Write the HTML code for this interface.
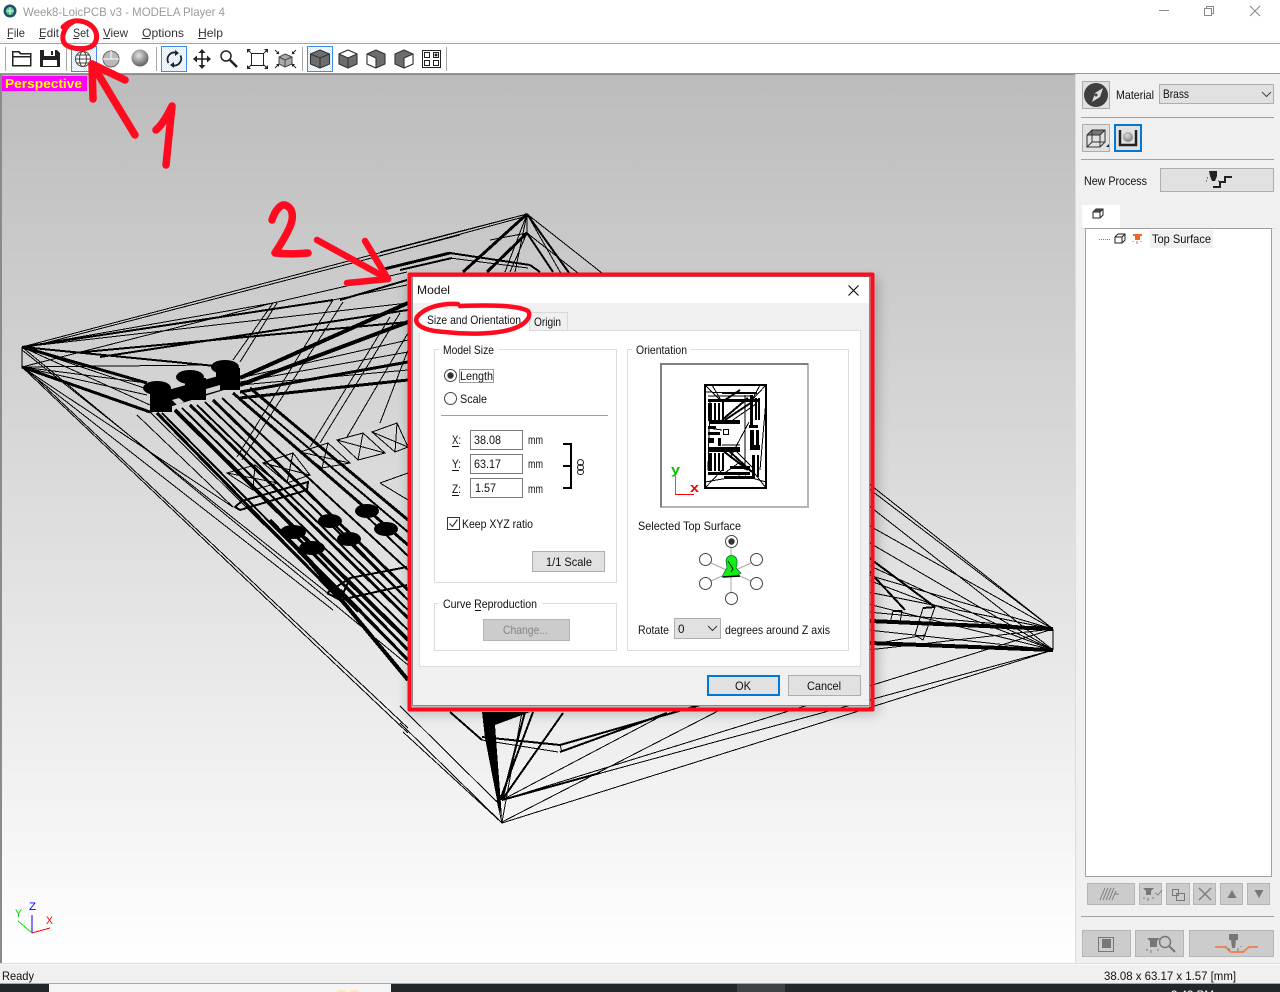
<!DOCTYPE html>
<html><head><meta charset="utf-8"><title>MODELA Player 4</title>
<style>
html,body{margin:0;padding:0;background:#f0f0f0;width:1280px;height:992px;overflow:hidden}
svg{position:absolute;left:0;top:0;display:block}
text{font-family:"Liberation Sans",sans-serif;font-size:12px;fill:#111;white-space:pre}
.m text{fill:#333}
.w line,.w path,.w polyline{fill:none;stroke:#000;stroke-width:1;shape-rendering:crispEdges}
.w .t2{stroke-width:2}.w .t3{stroke-width:3}.w .t4{stroke-width:4}
.c{shape-rendering:crispEdges}
.b{fill:#e1e1e1;stroke:#adadad;shape-rendering:crispEdges}
.g{fill:#fff;stroke:#dcdcdc;shape-rendering:crispEdges}
.i{fill:#fff;stroke:#7a7a7a;shape-rendering:crispEdges}
.r{fill:#fff;stroke:#444}
.red{fill:none;stroke:#ff0a1e;stroke-width:7.5;stroke-linecap:round;stroke-linejoin:round}
.dis{fill:#ccc;stroke:#b5b5b5;shape-rendering:crispEdges}
.ic{fill:none;stroke:#222;stroke-width:1.5}
.gi{fill:none;stroke:#808080;stroke-width:1.5}
</style></head><body>
<svg width="1280" height="992" viewBox="0 0 1280 992" xmlns="http://www.w3.org/2000/svg">
<defs>
<linearGradient id="bg" x1="0" y1="0" x2="0" y2="1"><stop offset="0" stop-color="#bcbcbc"/><stop offset="1" stop-color="#ffffff"/></linearGradient>
<radialGradient id="sph" cx=".42" cy=".35" r=".7"><stop offset="0" stop-color="#e4e4e4"/><stop offset=".6" stop-color="#8e8e8e"/><stop offset="1" stop-color="#555"/></radialGradient>
<radialGradient id="sph2" cx=".42" cy=".35" r=".7"><stop offset="0" stop-color="#dcdcdc"/><stop offset="1" stop-color="#777"/></radialGradient>
<filter id="sh" x="-10%" y="-10%" width="120%" height="120%"><feGaussianBlur stdDeviation="6"/></filter>
<pattern id="dit" width="2" height="2" patternUnits="userSpaceOnUse"><rect width="2" height="2" fill="#fff"/><rect width="1" height="1" fill="#dfe9f3"/><rect x="1" y="1" width="1" height="1" fill="#dfe9f3"/></pattern>
</defs>

<!-- window chrome -->
<rect width="1280" height="992" fill="#f0f0f0"/>
<rect width="1280" height="43" fill="#fff"/>
<rect y="41" width="1280" height="1" fill="#f0f0f0"/>
<rect y="43" width="1280" height="1" fill="#a0a0a0"/>
<rect y="44" width="1280" height="29" fill="#fff"/>
<rect y="73" width="1280" height="1" fill="#9a9a9a"/>

<!-- app icon -->
<circle cx="10" cy="11" r="6.5" fill="#1d4f6e"/><circle cx="10" cy="11" r="4" fill="#5fc27a"/><path d="M10 7.5v7M6.5 11h7" stroke="#dff" stroke-width="1"/>
<text x="23" y="16" textLength="202" lengthAdjust="spacingAndGlyphs" style="fill:#9b9b9b">Week8-LoicPCB v3 - MODELA Player 4</text>
<!-- window controls -->
<path class="c" d="M1159 10.500h10" stroke="#888" fill="none"/>
<path class="c" d="M1204.500 8.500h7v7h-7zM1206.500 8.500v-2h7v7h-2" stroke="#888" fill="none"/>
<path d="M1250 6l10 10M1260 6l-10 10" stroke="#888" fill="none"/>

<!-- menu -->
<g class="m">
<text x="7" y="37" textLength="18" lengthAdjust="spacingAndGlyphs">File</text><rect x="7" y="38" width="6" height="1" fill="#333"/>
<text x="39" y="37" textLength="20" lengthAdjust="spacingAndGlyphs">Edit</text><rect x="39" y="38" width="6" height="1" fill="#333"/>
<text x="73" y="37" textLength="16" lengthAdjust="spacingAndGlyphs">Set</text><rect x="73" y="38" width="6" height="1" fill="#333"/>
<text x="103" y="37" textLength="25" lengthAdjust="spacingAndGlyphs">View</text><rect x="103" y="38" width="7" height="1" fill="#333"/>
<text x="142" y="37" textLength="42" lengthAdjust="spacingAndGlyphs">Options</text><rect x="142" y="38" width="8" height="1" fill="#333"/>
<text x="198" y="37" textLength="25" lengthAdjust="spacingAndGlyphs">Help</text><rect x="198" y="38" width="8" height="1" fill="#333"/>
</g>

<!-- toolbar -->
<g class="c" fill="#a8a8a8">
<rect x="5" y="47" width="1" height="24"/><rect x="66" y="47" width="1" height="24"/><rect x="156" y="47" width="1" height="24"/><rect x="302" y="47" width="1" height="24"/><rect x="446" y="47" width="1" height="24"/>
</g>
<path d="M12.500 65.500v-14h6l2 2h10v12z M12.500 56.500h18" fill="#fff" stroke="#222" stroke-width="1.500" class="c"/>
<path d="M40 50h17l3 3v14H40z" fill="#222"/><rect x="44" y="50" width="11" height="6" fill="#fff"/><rect x="51" y="51" width="2" height="4" fill="#222"/><rect x="43" y="60" width="14" height="6" fill="#fff"/>
<!-- globe selected -->
<rect x="71.500" y="46.500" width="25" height="25" fill="url(#dit)" stroke="#3c8fe4" class="c"/>
<circle cx="83" cy="59" r="7.500" fill="#fff" stroke="#444"/><ellipse cx="83" cy="59" rx="3.500" ry="7.500" fill="none" stroke="#444"/><path d="M75.500 59h15M76.500 55h13M76.500 63h13" stroke="#444" fill="none"/>
<circle cx="111" cy="59" r="8" fill="#b9b9b9" stroke="#666"/><path d="M103 59h16M111 51v8" stroke="#fff" fill="none"/>
<circle cx="140" cy="58" r="8.500" fill="url(#sph)"/>
<!-- rotate -->
<rect x="161.500" y="46.500" width="25" height="25" fill="url(#dit)" stroke="#3c8fe4" class="c"/>
<path d="M168.500 63a7 7 0 0 1 7-10.500M180.500 55.500a7 7 0 0 1-7 10" fill="none" stroke="#222" stroke-width="1.800"/>
<path d="M175 50l4 3-4 3zM174 68l-4-3 4-3z" fill="#222"/>
<!-- move -->
<path d="M202 51v16M194 59h16" stroke="#222" stroke-width="1.600" fill="none"/>
<path d="M202 49l3.500 4h-7zM202 69l3.500-4h-7zM193 59l4-3.500v7zM211 59l-4-3.500v7z" fill="#222"/>
<!-- zoom -->
<circle cx="226" cy="56" r="5" fill="#fff" stroke="#222" stroke-width="1.500"/><path d="M230 60l7 7" stroke="#222" stroke-width="2.500"/>
<!-- fit -->
<rect class="c" x="251.500" y="53.500" width="12" height="12" fill="none" stroke="#222"/>
<path d="M248 50l3 3M267 50l-3 3M248 68l3-3M267 68l-3-3" stroke="#222" fill="none"/>
<path d="M247 49h4l-4 4zM268 49h-4l4 4zM247 69h4l-4-4zM268 69h-4l4-4z" fill="#222"/>
<!-- fit2 -->
<path d="M285 54l7 3v7l-7 3-6-3v-7z" fill="#aaa" stroke="#444"/><path d="M279 57l6 3 7-3M285 60v7" fill="none" stroke="#444"/>
<path d="M275 50l4 4M296 50l-4 4M275 68l4-4M296 68l-4-4" stroke="#222" fill="none"/>
<path d="M279 54v-3l-3 3zM292 54v-3l3 3zM279 64v3l-3-3zM292 64v3l3-3z" fill="#222"/>
<!-- view cubes -->
<rect x="307.500" y="46.500" width="25" height="25" fill="url(#dit)" stroke="#3c8fe4" class="c"/>
<g stroke="#333" stroke-width="1.100" stroke-linejoin="round">
<path d="M320 50l9.500 4v10l-9.500 4-9.500-4V54z" fill="#6d6d6d"/><path d="M310.500 54l9.500 4 9.500-4M320 58v10" fill="none"/>
<path d="M348 50l9 4v10l-9 4-9-4V54z" fill="#6d6d6d"/><path d="M348 50l9 4-9 4-9-4z" fill="#fff"/><path d="M348 58v10" fill="none"/>
<path d="M376 50l9 4v10l-9 4-9-4V54z" fill="#6d6d6d"/><path d="M367 54l9 4v10l-9-4z" fill="#fff"/>
<path d="M404 50l9 4v10l-9 4-9-4V54z" fill="#6d6d6d"/><path d="M413 54l-9 4v10l9-4z" fill="#fff"/>
</g>
<!-- quad -->
<g class="c" fill="none" stroke="#222"><rect x="422.500" y="50.500" width="18" height="17"/><rect x="424.500" y="52.500" width="5" height="5"/><rect x="433.500" y="52.500" width="5" height="5"/><rect x="424.500" y="60.500" width="5" height="5"/><rect x="433.500" y="60.500" width="5" height="5"/></g>
<circle cx="436" cy="55" r="1.500" fill="#222"/>

<!-- viewport -->
<rect x="0" y="74" width="1076" height="890" fill="url(#bg)" class="c"/>
<rect x="0" y="74" width="2" height="890" fill="#8a8a8a" class="c"/>
<rect x="2" y="74" width="1074" height="1" fill="#8a8a8a" class="c"/>
<rect x="1075" y="74" width="1" height="890" fill="#dcdcdc" class="c"/>
<rect x="2" y="76" width="85" height="15" fill="#ff00ff" class="c"/>
<text x="5" y="88" textLength="77" lengthAdjust="spacingAndGlyphs" style="fill:#ffff00;font-weight:bold;font-size:13px">Perspective</text>

<!-- wireframe -->
<g class="w">
<!-- outer: left corner -->
<line x1="22" y1="347" x2="22" y2="367"/>
<line x1="22" y1="347" x2="527" y2="214"/>
<line x1="22" y1="349" x2="460" y2="235"/>
<line x1="22" y1="367" x2="273" y2="303"/>
<line x1="22" y1="347" x2="273" y2="303"/>
<line x1="22" y1="347" x2="333" y2="300" class="t2"/>
<line x1="22" y1="347" x2="408" y2="303"/>
<line x1="22" y1="367" x2="210" y2="365"/>
<line x1="22" y1="347" x2="215" y2="366" class="t2"/>
<line x1="22" y1="347" x2="147" y2="383" class="t3"/>
<line x1="22" y1="347" x2="150" y2="390"/>
<line x1="22" y1="367" x2="150" y2="412" class="t3"/>
<line x1="22" y1="367" x2="147" y2="383"/>
<line x1="22" y1="367" x2="147" y2="395"/>
<line x1="22" y1="347" x2="150" y2="405"/>
<line x1="22" y1="347" x2="408" y2="665"/>
<line x1="22" y1="367" x2="408" y2="733"/>
<line x1="24" y1="367" x2="408" y2="728"/>
<line x1="22" y1="367" x2="333" y2="610"/>
<line x1="22" y1="367" x2="233" y2="507"/>
<line x1="22" y1="350" x2="330" y2="595"/>
<line x1="400" y1="723" x2="502" y2="823"/>
<line x1="403" y1="732" x2="502" y2="823"/>
<line x1="400" y1="706" x2="497" y2="802"/>
<line x1="340" y1="300" x2="407" y2="280" class="t2"/>
<line x1="273" y1="303" x2="407" y2="272"/>
<line x1="333" y1="300" x2="407" y2="285"/>
<line x1="73" y1="353" x2="408" y2="322" class="t2"/>
<line x1="100" y1="357" x2="408" y2="310" class="t2"/>
<!-- from cluster to right -->
<line x1="240" y1="378" x2="408" y2="303" class="t4"/>
<line x1="240" y1="385" x2="408" y2="322" class="t4"/>
<line x1="240" y1="392" x2="408" y2="362" class="t3"/>
<line x1="240" y1="398" x2="408" y2="380" class="t3"/>
<line x1="240" y1="378" x2="408" y2="340"/>
<line x1="240" y1="382" x2="408" y2="352"/>
<line x1="240" y1="385" x2="408" y2="370"/>
<!-- rising doubles -->
<line x1="233" y1="360" x2="273" y2="303"/><line x1="240" y1="362" x2="277" y2="303"/>
<line x1="333" y1="300" x2="237" y2="457"/><line x1="343" y1="302" x2="242" y2="460"/>
<line x1="390" y1="317" x2="310" y2="447"/><line x1="400" y1="313" x2="320" y2="443"/>
<line x1="408" y1="333" x2="347" y2="437"/><line x1="408" y1="350" x2="380" y2="423"/>
<!-- pads -->
<path d="M337 440l21 20 27-7-22-20zM337 440l48 13M358 460l5-27"/>
<path d="M372 432l23 20 13-5-11-24zM372 432l36 15M395 452l2-29"/>
<path d="M300 452l22 16 28-5-22-20zM300 452l50 11M322 468l6-25"/>
<path d="M263 463l24 20 23-8-17-22zM263 463l47 12M287 483l6-30"/>
<path d="M227 473l26 17 25-7-23-18zM227 473l51 10M253 490l2-25"/>
<path d="M235 507l5 3 67-20 1-8-66 19z" class="t2"/>
<path d="M380 483l28-10M380 483l28 17"/>
<path d="M327 593l23-15 57-11M327 593l13 7 67-15M350 578l-10 22" class="t2"/>
<!-- diagonals -->
<line x1="157" y1="413" x2="350" y2="610" class="t3"/>
<line x1="162" y1="413" x2="358" y2="612" class="t2"/>
<line x1="137" y1="415" x2="233" y2="507"/>
<line x1="150" y1="412" x2="340" y2="600"/>
<line x1="175" y1="410" x2="408" y2="640" class="t4"/>
<line x1="182" y1="408" x2="408" y2="630" class="t2"/>
<line x1="190" y1="405" x2="408" y2="618" class="t3"/>
<line x1="197" y1="405" x2="408" y2="610" class="t2"/>
<line x1="205" y1="402" x2="408" y2="600" class="t2"/>
<line x1="213" y1="400" x2="408" y2="590" class="t3"/>
<line x1="222" y1="398" x2="408" y2="570" class="t2"/>
<line x1="233" y1="393" x2="408" y2="545" class="t3"/>
<line x1="241" y1="391" x2="408" y2="532" class="t2"/>
<line x1="250" y1="388" x2="408" y2="520" class="t3"/>
<line x1="270" y1="520" x2="408" y2="660" class="t3"/>
<line x1="290" y1="530" x2="408" y2="650" class="t3"/>
<line x1="330" y1="520" x2="408" y2="600" class="t2"/>
<line x1="360" y1="510" x2="408" y2="556" class="t2"/>
<line x1="300" y1="550" x2="408" y2="680" class="t4"/>
<line x1="340" y1="590" x2="408" y2="660" class="t3"/>
<!-- top apex -->
<line x1="527" y1="214" x2="527" y2="233"/>
<line x1="527" y1="214" x2="380" y2="252"/>
<line x1="527" y1="216" x2="380" y2="256"/>
<line x1="527" y1="233" x2="490" y2="240"/>
<line x1="527" y1="214" x2="463" y2="272" class="t3"/>
<line x1="527" y1="233" x2="487" y2="272" class="t3"/>
<line x1="527" y1="214" x2="505" y2="272"/>
<line x1="527" y1="214" x2="515" y2="272"/>
<line x1="527" y1="233" x2="510" y2="272"/>
<line x1="527" y1="214" x2="607" y2="277"/>
<line x1="527" y1="214" x2="572" y2="277" class="t2"/>
<line x1="527" y1="233" x2="553" y2="272" class="t2"/>
<line x1="527" y1="233" x2="583" y2="277"/>
<line x1="527" y1="214" x2="563" y2="277"/>
<line x1="450" y1="253" x2="530" y2="265" class="t2"/>
<line x1="450" y1="258" x2="528" y2="268"/>
<line x1="530" y1="265" x2="540" y2="272" class="t2"/>
<line x1="450" y1="253" x2="380" y2="270" class="t3"/>
<line x1="452" y1="258" x2="400" y2="270" class="t2"/>
<!-- right corner -->
<line x1="1053" y1="629" x2="1053" y2="650"/>
<line x1="868" y1="483" x2="1053" y2="629"/>
<line x1="868" y1="488" x2="1053" y2="629"/>
<line x1="868" y1="505" x2="1053" y2="650"/>
<line x1="868" y1="525" x2="1053" y2="629"/>
<line x1="868" y1="542" x2="1053" y2="650"/>
<line x1="868" y1="565" x2="1053" y2="650"/>
<line x1="868" y1="575" x2="1053" y2="629"/>
<line x1="868" y1="580" x2="1053" y2="650"/>
<line x1="868" y1="592" x2="1053" y2="629"/>
<line x1="868" y1="604" x2="1053" y2="650"/>
<line x1="868" y1="612" x2="1053" y2="629"/>
<line x1="868" y1="630" x2="1053" y2="650"/>
<line x1="870" y1="621" x2="1053" y2="629" class="t4"/>
<line x1="870" y1="643" x2="1053" y2="650" class="t4"/>
<line x1="868" y1="650" x2="1053" y2="629"/>
<line x1="868" y1="557" x2="935" y2="607" class="t2"/>
<line x1="868" y1="570" x2="905" y2="610" class="t2"/>
<path d="M935 607l-12 1-8 27 8 5zM923 608l12-1" />
<line x1="923" y1="608" x2="935" y2="607" class="t2"/>
<path d="M902 611l-9 0-3 12 10-1z"/>
<line x1="893" y1="611" x2="902" y2="611" class="t2"/>
<line x1="868" y1="645" x2="925" y2="635"/>
<line x1="1053" y1="629" x2="502" y2="800"/>
<line x1="1053" y1="650" x2="502" y2="823"/>
<line x1="1053" y1="650" x2="502" y2="800"/>
<!-- bottom apex -->
<polygon points="482,712 530,712 495,725 502,818 497,800 485,738" fill="#000" style="shape-rendering:crispEdges"/>
<line x1="502" y1="823" x2="497" y2="800"/>
<line x1="560" y1="745" x2="700" y2="705" class="t2"/>
<line x1="560" y1="752" x2="667" y2="713" class="t2"/>
<line x1="560" y1="745" x2="562" y2="752"/>
<line x1="482" y1="737" x2="560" y2="745" class="t2"/>
<line x1="482" y1="740" x2="558" y2="752"/>
<line x1="450" y1="712" x2="482" y2="740" class="t2"/>
<line x1="502" y1="822" x2="720" y2="710"/>
<line x1="502" y1="800" x2="667" y2="713"/>
<line x1="500" y1="800" x2="533" y2="712" class="t2"/>
<line x1="502" y1="800" x2="563" y2="713" class="t2"/>
<line x1="502" y1="822" x2="522" y2="712"/>
<line x1="502" y1="800" x2="525" y2="712" class="t2"/>
<line x1="502" y1="800" x2="600" y2="773" class="t2"/>
</g>
<!-- solid pad blobs -->
<g fill="#000">
<ellipse cx="225" cy="367" rx="14" ry="7"/><ellipse cx="190" cy="377" rx="14" ry="7"/><ellipse cx="157" cy="388" rx="14" ry="7"/>
<path d="M150 395l90-25v15l-90 28z"/>
<rect x="216" y="368" width="24" height="22"/><rect x="185" y="378" width="21" height="22"/><rect x="150" y="390" width="22" height="22"/>
<ellipse cx="367" cy="511" rx="12" ry="7"/><ellipse cx="330" cy="521" rx="12" ry="7"/><ellipse cx="386" cy="529" rx="12" ry="7"/><ellipse cx="349" cy="539" rx="12" ry="7"/><ellipse cx="293" cy="532" rx="13" ry="7"/><ellipse cx="312" cy="548" rx="13" ry="7"/>
</g>
<g fill="#d2d2d2"><path d="M172 400l7-2 5 4-7 3zM206 389l14-4v5l-14 4z"/></g>

<!-- axis -->
<path d="M32 933V915" stroke="#0000ff" class="c"/>
<path d="M32 933L18 921" stroke="#00e000" class="c"/>
<path d="M32 933L50 928" stroke="#ff0000" class="c"/>
<text x="29" y="910" textLength="7" lengthAdjust="spacingAndGlyphs" style="fill:#0000ff;font-size:11px">Z</text>
<text x="15" y="917" textLength="7" lengthAdjust="spacingAndGlyphs" style="fill:#00d000;font-size:11px">Y</text>
<text x="46" y="924" textLength="7" lengthAdjust="spacingAndGlyphs" style="fill:#ff0000;font-size:11px">X</text>

<!-- right panel -->
<rect x="1077" y="74" width="203" height="890" fill="#f0f0f0" class="c"/>
<rect x="1082.500" y="81.500" width="27" height="27" class="b"/>
<circle cx="1096" cy="95" r="12" fill="#3f3f3f"/><path d="M1103 88l-8 5-3 9 8-5z" fill="#ddd"/><circle cx="1096" cy="95" r="1.500" fill="#3f3f3f"/>
<text x="1116" y="99" textLength="38" lengthAdjust="spacingAndGlyphs">Material</text>
<rect x="1159.500" y="84.500" width="114" height="19" class="b"/>
<text x="1163" y="98" textLength="26" lengthAdjust="spacingAndGlyphs">Brass</text>
<path d="M1262 92l4.500 4.500 4.500-4.500" fill="none" stroke="#444"/>
<rect x="1081" y="117" width="193" height="1" fill="#a0a0a0" class="c"/>
<rect x="1082.500" y="124.500" width="27" height="27" class="b"/>
<path d="M1092 130h13l-5 5h-13z" fill="#777"/>
<path d="M1087 135l5-5h13v12l-5 5h-13zM1087 135h13v12M1100 135l5-5M1087 147l5-5h13M1092 130v12" fill="none" stroke="#333"/><path d="M1109 147v-3l-3 3z" fill="#222"/>
<rect x="1115" y="125" width="26" height="26" fill="#e1e1e1" stroke="#0078d7" stroke-width="2" class="c"/>
<path d="M1120 130v15h16v-15" fill="none" stroke="#222" stroke-width="2.500"/><circle cx="1128" cy="137" r="5" fill="url(#sph2)"/>
<rect x="1081" y="159" width="193" height="1" fill="#a0a0a0" class="c"/>
<text x="1084" y="185" textLength="63" lengthAdjust="spacingAndGlyphs">New Process</text>
<rect x="1160.500" y="168.500" width="113" height="23" class="b"/>
<path d="M1209 171h8v5l-2 5h-3l-2-5z" fill="#222"/><path d="M1213 187h7v-5h5v-5h7" fill="none" stroke="#222" stroke-width="2"/><path d="M1207 178h1M1206 181h1M1218 181h1" stroke="#222"/>
<!-- tree -->
<rect x="1082" y="205" width="38" height="24" fill="#fff" class="c"/>
<rect x="1081" y="228" width="195" height="1" fill="#dcdcdc" class="c"/>
<path class="ic" style="stroke-width:1" d="M1093 212l3-3h7v6l-3 3h-7zM1093 212h7v6M1100 212l3-3"/><path d="M1096 209h7l-3 3h-7z" fill="#444"/>
<rect x="1085.500" y="228.500" width="186" height="648" fill="#fff" stroke="#a0a0a0" class="c"/>
<path d="M1099 239.500h12" stroke="#777" stroke-dasharray="1 1" fill="none" class="c"/>
<path d="M1115 237l3-3h7v6l-3 3h-7zM1115 237h7v6M1122 237l3-3" fill="none" stroke="#222"/>
<path d="M1133 234h9v2h-2v4h-5v-4h-2z" fill="#f26522"/><path d="M1137 241v3M1133 241v1M1141 241v1" stroke="#f26522"/>
<rect x="1150" y="230" width="63" height="18" fill="#f0f0f0" class="c"/>
<text x="1152" y="243" textLength="59" lengthAdjust="spacingAndGlyphs">Top Surface</text>
<!-- small buttons -->
<rect x="1087.500" y="883.500" width="47" height="21" class="dis"/>
<rect x="1139.500" y="883.500" width="22" height="21" class="dis"/>
<rect x="1166.500" y="883.500" width="23" height="21" class="dis"/>
<rect x="1193.500" y="883.500" width="22" height="21" class="dis"/>
<rect x="1220.500" y="883.500" width="22" height="21" class="dis"/>
<rect x="1247.500" y="883.500" width="22" height="21" class="dis"/>
<path d="M1100 900l5-12M1103 900l5-12M1106 900l5-12M1109 900l5-12M1112 900l4-9M1115 894h4" class="gi" style="stroke-width:1"/>
<path d="M1143 888h11l-3 3v4h-5v-4z" fill="#777"/><path d="M1155 893l3 2 4-5" class="gi" style="stroke-width:1"/><path d="M1148 898v3M1144 897v2M1153 897v2" stroke="#777"/>
<path class="c" d="M1176.500 893.500h8v7h-8z" fill="none" stroke="#777"/><rect x="1172.500" y="889.500" width="6" height="6" fill="none" stroke="#777" class="c"/>
<path d="M1199 888l12 12M1211 888l-12 12" class="gi"/>
<path d="M1232 890l4.500 8h-9z" fill="#777"/><path d="M1259 898l4.500-8h-9z" fill="#777"/>
<rect x="1081" y="916" width="193" height="1" fill="#a0a0a0" class="c"/>
<!-- big buttons -->
<rect x="1082.500" y="930.500" width="48" height="26" class="dis"/>
<rect x="1135.500" y="930.500" width="48" height="26" class="dis"/>
<rect x="1189.500" y="930.500" width="84" height="26" class="dis"/>
<rect class="c" x="1098.500" y="937.500" width="15" height="14" fill="none" stroke="#777"/><rect x="1102" y="939" width="9" height="9" fill="#777" class="c"/>
<path d="M1147 938h13l-3 3v6h-7v-6z" fill="#777"/><path d="M1151 950v3M1147 949v2M1158 949v2" stroke="#777"/>
<circle cx="1165" cy="942" r="5.500" fill="none" stroke="#777" stroke-width="1.500"/><path d="M1169 946l6 6" stroke="#777" stroke-width="2"/>
<path d="M1215 947h10l6 5h12l6-5h9" fill="none" stroke="#e8885a" stroke-width="2"/>
<path d="M1229 934h9v6h-2l-1 8h-3l-1-8h-2z" fill="#777"/><path d="M1229 948v3M1238 948v3M1226 946v1M1241 946v1" stroke="#777"/>

<!-- status -->
<rect y="963" width="1280" height="1" fill="#dcdcdc" class="c"/>
<rect y="964" width="1280" height="1" fill="#fafafa" class="c"/>
<rect y="983" width="1280" height="1" fill="#a8a8a8" class="c"/>
<text x="2" y="980" textLength="32" lengthAdjust="spacingAndGlyphs">Ready</text>
<text x="1104" y="980" textLength="132" lengthAdjust="spacingAndGlyphs">38.08 x 63.17 x 1.57 [mm]</text>
<!-- taskbar -->
<rect y="984" width="1280" height="8" fill="#22272c" class="c"/>
<rect x="49" y="984" width="342" height="8" fill="#f5f5f5" class="c"/>
<rect x="737" y="984" width="48" height="8" fill="#3d4247" class="c"/>
<rect x="338" y="990" width="8" height="2" fill="#ffe9b8" class="c"/><rect x="350" y="990" width="8" height="2" fill="#ffe9b8" class="c"/>
<text x="1171" y="999" textLength="43" lengthAdjust="spacingAndGlyphs" style="fill:#fff">3:43 PM</text>

<!-- dialog -->
<rect x="408" y="278" width="470" height="436" fill="#000" opacity=".22" filter="url(#sh)"/>
<rect x="412.500" y="276.500" width="457" height="429" fill="#f0f0f0" stroke="#888" class="c"/>
<rect x="413" y="277" width="456" height="26" fill="#fff" class="c"/>
<text x="417" y="294" textLength="33" lengthAdjust="spacingAndGlyphs">Model</text>
<path d="M848.500 285.500l10 10M858.500 285.500l-10 10" stroke="#111" fill="none" stroke-width="1.200"/>
<rect x="419.500" y="330.500" width="441" height="336" class="g"/>
<rect x="529.500" y="312.500" width="38" height="18" fill="#f0f0f0" stroke="#d9d9d9" class="c"/>
<rect x="418" y="309" width="111" height="23" fill="#fff" class="c"/>
<text x="427" y="324" textLength="94" lengthAdjust="spacingAndGlyphs">Size and Orientation</text>
<text x="534" y="326" textLength="27" lengthAdjust="spacingAndGlyphs">Origin</text>

<!-- groups -->
<rect x="434.500" y="349.500" width="182" height="233" class="g" style="fill:none"/>
<rect x="439" y="344" width="60" height="12" fill="#fff" class="c"/>
<text x="443" y="354" textLength="51" lengthAdjust="spacingAndGlyphs">Model Size</text>
<circle cx="450.500" cy="375.500" r="6" class="r"/><circle cx="450.500" cy="375.500" r="3.200" fill="#333"/>
<text x="460" y="380" textLength="33" lengthAdjust="spacingAndGlyphs">Length</text>
<rect x="459.500" y="369.500" width="34" height="13" fill="none" stroke="#333" stroke-dasharray="1 1" class="c"/>
<circle cx="450.500" cy="398.500" r="6" class="r"/>
<text x="460" y="403" textLength="27" lengthAdjust="spacingAndGlyphs">Scale</text>
<rect x="441" y="415" width="167" height="1" fill="#a0a0a0" class="c"/>

<text x="452" y="444" textLength="9" lengthAdjust="spacingAndGlyphs">X:</text><rect x="452" y="446" width="7" height="1" fill="#111"/>
<text x="452" y="468" textLength="9" lengthAdjust="spacingAndGlyphs">Y:</text><rect x="452" y="470" width="7" height="1" fill="#111"/>
<text x="452" y="493" textLength="9" lengthAdjust="spacingAndGlyphs">Z:</text><rect x="452" y="495" width="7" height="1" fill="#111"/>
<rect x="470.500" y="430.500" width="52" height="19" class="i"/><text x="474" y="444" textLength="27" lengthAdjust="spacingAndGlyphs">38.08</text>
<rect x="470.500" y="454.500" width="52" height="19" class="i"/><text x="474" y="468" textLength="27" lengthAdjust="spacingAndGlyphs">63.17</text>
<rect x="470.500" y="478.500" width="52" height="19" class="i"/><text x="475" y="492" textLength="21" lengthAdjust="spacingAndGlyphs">1.57</text>
<text x="528" y="444" textLength="15" lengthAdjust="spacingAndGlyphs">mm</text>
<text x="528" y="468" textLength="15" lengthAdjust="spacingAndGlyphs">mm</text>
<text x="528" y="493" textLength="15" lengthAdjust="spacingAndGlyphs">mm</text>
<path class="c" d="M563 444h8v44h-8M563 466h8" fill="none" stroke="#000" stroke-width="2"/>
<g fill="none" stroke="#222"><rect x="577.500" y="459.500" width="6" height="6" rx="3"/><rect x="577.500" y="464.500" width="6" height="6" rx="3"/><rect x="577.500" y="469.500" width="6" height="5" rx="2.500"/></g>
<rect x="447.500" y="517.500" width="12" height="12" fill="#fff" stroke="#333" class="c"/>
<path d="M449.500 523.500l3 3 5-7" fill="none" stroke="#333" stroke-width="1.200"/>
<text x="462" y="528" textLength="71" lengthAdjust="spacingAndGlyphs">Keep XYZ ratio</text>
<rect x="532.500" y="551.500" width="72" height="20" class="b"/>
<text x="546" y="566" textLength="46" lengthAdjust="spacingAndGlyphs">1/1 Scale</text>

<rect x="434.500" y="603.500" width="182" height="47" class="g" style="fill:none"/>
<rect x="439" y="598" width="103" height="12" fill="#fff" class="c"/>
<text x="443" y="608" textLength="94" lengthAdjust="spacingAndGlyphs">Curve Reproduction</text>
<rect x="475" y="610" width="6" height="1" fill="#111"/>
<rect x="483.500" y="619.500" width="86" height="21" class="dis"/>
<text x="503" y="634" textLength="45" lengthAdjust="spacingAndGlyphs" style="fill:#858585">Change...</text>

<rect x="627.500" y="349.500" width="221" height="301" class="g" style="fill:none"/>
<rect x="632" y="344" width="59" height="12" fill="#fff" class="c"/>
<text x="636" y="354" textLength="51" lengthAdjust="spacingAndGlyphs">Orientation</text>
<!-- preview -->
<rect x="661" y="364" width="147" height="143" fill="#fff" stroke="#b4b4b4" stroke-width="2" class="c"/>
<path class="c" d="M661 507V364h147" fill="none" stroke="#808080" stroke-width="2"/>
<g class="w">
<rect x="705" y="385" width="61" height="103" style="fill:none;stroke:#000;stroke-width:2;shape-rendering:crispEdges"/>
<line x1="705" y1="385" x2="722" y2="402"/><line x1="766" y1="385" x2="752" y2="400"/><line x1="705" y1="488" x2="722" y2="470"/><line x1="766" y1="488" x2="752" y2="470"/>
<line x1="705" y1="392" x2="735" y2="393"/><line x1="712" y1="385" x2="722" y2="402"/><line x1="760" y1="385" x2="752" y2="400"/><line x1="705" y1="482" x2="740" y2="476"/><line x1="766" y1="482" x2="745" y2="476"/>
<line x1="722" y1="402" x2="740" y2="390" class="t2"/><line x1="748" y1="398" x2="722" y2="420" class="t2"/><line x1="752" y1="402" x2="725" y2="420" class="t2"/><line x1="756" y1="404" x2="730" y2="422"/>
<line x1="749" y1="422" x2="730" y2="458"/><line x1="722" y1="450" x2="748" y2="470" class="t2"/><line x1="728" y1="450" x2="752" y2="472" class="t2"/><line x1="735" y1="450" x2="755" y2="470"/>
<line x1="722" y1="475" x2="740" y2="462"/><line x1="766" y1="400" x2="760" y2="470"/><line x1="710" y1="400" x2="708" y2="470"/>
<line x1="708" y1="396" x2="750" y2="396"/><line x1="708" y1="428" x2="722" y2="430"/><line x1="722" y1="445" x2="740" y2="445"/><line x1="745" y1="395" x2="745" y2="470"/>
</g>
<g fill="#000" class="c">
<rect x="708" y="399" width="50" height="3"/><rect x="722" y="392" width="35" height="2"/><rect x="708" y="403" width="4" height="18"/><rect x="714" y="403" width="2" height="18"/><rect x="718" y="403" width="2" height="18"/><rect x="722" y="400" width="2" height="20"/>
<rect x="710" y="420" width="30" height="4"/><rect x="708" y="447" width="32" height="5"/><rect x="708" y="426" width="8" height="3"/><rect x="708" y="432" width="12" height="3"/><rect x="708" y="438" width="6" height="5"/><rect x="718" y="438" width="3" height="8"/>
<rect x="708" y="453" width="4" height="18"/><rect x="714" y="453" width="2" height="18"/><rect x="718" y="453" width="2" height="18"/><rect x="722" y="453" width="2" height="18"/>
<rect x="750" y="395" width="3" height="30"/><rect x="755" y="398" width="2" height="22"/><rect x="758" y="398" width="2" height="22"/><rect x="749" y="425" width="9" height="3"/><rect x="750" y="430" width="4" height="18"/><rect x="756" y="430" width="3" height="16"/><rect x="750" y="445" width="10" height="5"/>
<rect x="708" y="472" width="42" height="3"/><rect x="724" y="476" width="30" height="3"/><rect x="752" y="455" width="3" height="24"/><rect x="757" y="455" width="2" height="22"/><rect x="730" y="466" width="20" height="3"/>
</g>
<rect class="c" x="723.500" y="429.500" width="5" height="5" fill="#fff" stroke="#000"/>
<path d="M675.500 494V476" stroke="#00c800" class="c"/><path d="M675 494.500h19" stroke="#ff0000" class="c"/>
<text x="671" y="474" textLength="9" lengthAdjust="spacingAndGlyphs" style="fill:#00c000;font-weight:bold;font-size:13px">y</text>
<text x="690" y="492" textLength="9" lengthAdjust="spacingAndGlyphs" style="fill:#ff0000;font-weight:bold;font-size:13px">x</text>

<text x="638" y="530" textLength="103" lengthAdjust="spacingAndGlyphs">Selected Top Surface</text>
<path d="M731 547v46M711 563l40 18M751 563l-40 18" stroke="#a8a8a8" fill="none"/>
<circle cx="731.500" cy="541.500" r="6" class="r"/><circle cx="731.500" cy="541.500" r="3.200" fill="#333"/>
<circle cx="705.500" cy="559.500" r="6" class="r"/><circle cx="756.500" cy="559.500" r="6" class="r"/><circle cx="705.500" cy="583.500" r="6" class="r"/><circle cx="756.500" cy="583.500" r="6" class="r"/><circle cx="731.500" cy="598.500" r="6" class="r"/>
<path d="M726 561a5 5 0 0 1 11 0v4l-1 3 5 5-5 3-14 1 3-6 2-3z" fill="#11ee11" stroke="#063" stroke-width=".7"/>
<path d="M723 577l17-1" stroke="#000" stroke-width="1.500"/><path d="M728 561l5 8-2 3" stroke="#111" fill="none"/>
<text x="638" y="634" textLength="31" lengthAdjust="spacingAndGlyphs">Rotate</text>
<rect x="674.500" y="618.500" width="46" height="20" class="b"/>
<text x="678" y="633" textLength="6.500" lengthAdjust="spacingAndGlyphs">0</text>
<path d="M708 626l4.500 4.500 4.500-4.500" fill="none" stroke="#333"/>
<text x="725" y="634" textLength="105" lengthAdjust="spacingAndGlyphs">degrees around Z axis</text>

<!-- ok/cancel -->
<rect x="708" y="676" width="71" height="19" fill="#e1e1e1" stroke="#0078d7" stroke-width="2" class="c"/>
<text x="735" y="690" textLength="16" lengthAdjust="spacingAndGlyphs">OK</text>
<rect x="788.500" y="675.500" width="72" height="20" class="b"/>
<text x="807" y="690" textLength="34" lengthAdjust="spacingAndGlyphs">Cancel</text>

<!-- red annotations -->
<path d="M409.500 274.500H872.500V709.500H409.500Z" fill="none" stroke="#ff0a1e" stroke-width="4" stroke-linejoin="round"/>
<g class="red">
<path d="M73 22C64 26 60 38 65 44C71 50 90 51 95 43C100 33 93 23 80 21C74 20 68 22 63 27" stroke-width="5"/>
<path d="M135 135L92 64" />
<path d="M93 99L92 64L125 80"/>
<path d="M156 130C163 124 168 114 172 106C170 125 168 145 166 165"/>
<path d="M272 220C275 210 281 204 285 205C292 207 294 215 291 224C287 235 280 245 275 253C285 254 298 254 308 253"/>
<path d="M317 240L388 279" stroke-width="6.500"/>
<path d="M365 241L388 279L347 283" stroke-width="6.500"/>
<path d="M458 304C440 303 424 308 417 317C413 325 425 331 445 332C470 335 500 334 515 328C526 324 532 316 528 311C518 305 490 305 460 306" stroke-width="4.500"/>
</g>
</svg>
</body></html>
